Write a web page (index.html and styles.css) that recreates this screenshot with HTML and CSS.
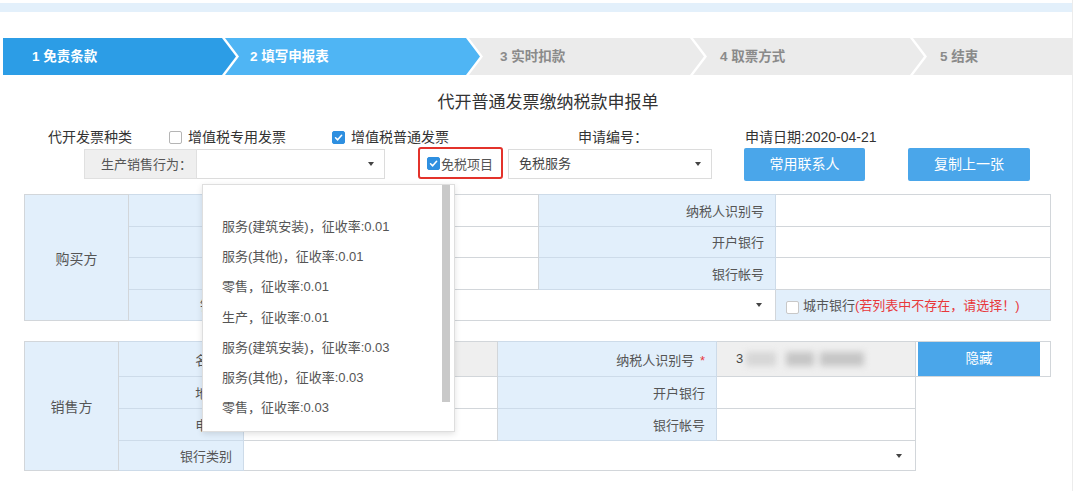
FILE: index.html
```html
<!DOCTYPE html>
<html lang="zh-CN">
<head>
<meta charset="utf-8">
<title>代开普通发票缴纳税款申报单</title>
<link rel="stylesheet" href="styles.css">
</head>
<body>
<div class="page">
  <div class="band"></div>
  <div class="steps">
    <div class="step s1 done">1 免责条款</div>
    <div class="step s2 cur">2 填写申报表</div>
    <div class="step s3">3 实时扣款</div>
    <div class="step s4">4 取票方式</div>
    <div class="step s5">5 结束</div>
  </div>
  <div class="form">
    <h1 class="title">代开普通发票缴纳税款申报单</h1>
    <div class="row1">
      <span class="kind">代开发票种类</span>
      <span class="opt opt1"><span class="cb"></span>增值税专用发票</span>
      <span class="opt opt2"><span class="cb on"><svg viewBox="0 0 13 13"><polyline points="3,6.8 5.5,9.3 10.2,3.8"/></svg></span>增值税普通发票</span>
      <span class="apply-no">申请编号：</span>
      <span class="apply-date">申请日期:2020-04-21</span>
    </div>
    <div class="row2">
      <span class="lbl-box">生产销售行为：</span>
      <span class="select sel1"><span class="caret"></span></span>
      <span class="redbox"><span class="cb on"><svg viewBox="0 0 13 13"><polyline points="3,6.8 5.5,9.3 10.2,3.8"/></svg></span>免税项目</span>
      <span class="select sel2">免税服务<span class="caret"></span></span>
      <span class="btn btn1">常用联系人</span>
      <span class="btn btn2">复制上一张</span>
    </div>

    <table class="tbl buyer">
      <colgroup><col class="c1"><col class="c2"><col class="c3"><col class="c4"><col class="c5"></colgroup>
      <tr>
        <td class="head" rowspan="4">购买方</td>
        <td class="lab"></td><td class="inp"></td>
        <td class="lab">纳税人识别号</td><td class="inp"></td>
      </tr>
      <tr>
        <td class="lab"></td><td class="inp"></td>
        <td class="lab">开户银行</td><td class="inp"></td>
      </tr>
      <tr>
        <td class="lab"></td><td class="inp"></td>
        <td class="lab">银行帐号</td><td class="inp"></td>
      </tr>
      <tr>
        <td class="lab">银行类别</td>
        <td class="inp sel" colspan="2"><span class="caret"></span></td>
        <td class="city"><span class="cb"></span>城市银行<span class="warn">(若列表中不存在，请选择！)</span></td>
      </tr>
    </table>

    <table class="tbl seller">
      <colgroup><col class="d1"><col class="d2"><col class="d3"><col class="d4"><col class="d5"><col class="d6"></colgroup>
      <tr class="r1">
        <td class="head" rowspan="4">销售方</td>
        <td class="lab">名称 <span class="req">*</span></td><td class="inp grey"></td>
        <td class="lab">纳税人识别号 <span class="req">*</span></td>
        <td class="inp grey"><span class="idnum">3</span><span class="blur"><i class="b1"></i><i class="b2"></i><i class="b3"></i></span></td>
        <td class="btncell"><span class="btn hide">隐藏</span></td>
      </tr>
      <tr>
        <td class="lab">地址 <span class="req">*</span></td><td class="inp"></td>
        <td class="lab">开户银行</td><td class="inp"></td>
        <td class="none"></td>
      </tr>
      <tr>
        <td class="lab">电话 <span class="req">*</span></td><td class="inp"></td>
        <td class="lab">银行帐号</td><td class="inp"></td>
        <td class="none"></td>
      </tr>
      <tr class="r4">
        <td class="lab">银行类别</td>
        <td class="inp sel" colspan="3"><span class="caret"></span></td>
        <td class="none"></td>
      </tr>
    </table>

    <div class="dropdown">
      <ul>
        <li class="blank"></li>
        <li>服务(建筑安装)，征收率:0.01</li>
        <li>服务(其他)，征收率:0.01</li>
        <li>零售，征收率:0.01</li>
        <li>生产，征收率:0.01</li>
        <li>服务(建筑安装)，征收率:0.03</li>
        <li>服务(其他)，征收率:0.03</li>
        <li>零售，征收率:0.03</li>
      </ul>
      <div class="scroll"></div>
    </div>
  </div>
</div>
</body>
</html>
```
FILE: styles.css
```css
* { box-sizing: border-box; }
html, body { margin: 0; padding: 0; background: #fff; }
body {
  font-family: "Liberation Sans", "Noto Sans CJK SC", sans-serif;
  color: #333;
  width: 1080px;
  height: 491px;
  overflow: hidden;
}
.page {
  width: 1073px;
  height: 491px;
  border-right: 1px solid #ececec;
  padding-top: 3px;
}
.band { height: 9px; background: #e3f0fb; }

/* steps */
.steps { display: flex; margin-top: 26px; padding-left: 3px; height: 37px; }
.step {
  height: 37px;
  line-height: 37px;
  font-size: 13.5px;
  font-weight: bold;
  color: #8a8a8a;
  background: #ebebeb;
  padding-left: 28px;
  margin-left: -11px;
  clip-path: polygon(0 0, calc(100% - 14px) 0, 100% 50%, calc(100% - 14px) 100%, 0 100%, 14px 50%);
  white-space: nowrap;
}
.step.done { background: #2c9de6; color: #fff; padding-left: 29px; }
.step.cur { background: #4fb5f4; color: #fff; padding-left: 25px; }
.s1 { width: 233px; margin-left: 0; clip-path: polygon(0 0, calc(100% - 14px) 0, 100% 50%, calc(100% - 14px) 100%, 0 100%); }
.s2 { width: 255px; }
.s3 { width: 235px; padding-left: 31px; }
.s4 { width: 231px; padding-left: 27px; }
.s5 { width: 159px; padding-left: 27px; clip-path: polygon(0 0, 100% 0, 100% 100%, 0 100%, 14px 50%); }

/* form */
.form { position: relative; }
.title {
  margin: 17px 0 0;
  padding-left: 24px;
  height: 22px;
  line-height: 22px;
  font-size: 17px;
  font-weight: normal;
  text-align: center;
  color: #333;
}
.row1 {
  display: flex;
  align-items: center;
  margin-top: 15px;
  height: 16px;
  line-height: 16px;
  font-size: 14px;
  padding-left: 48px;
  color: #333;
}
.opt { display: inline-flex; align-items: center; }
.opt .cb { margin-right: 6px; }
.opt1 { margin-left: 37px; }
.opt2 { margin-left: 46px; }
.apply-no { margin-left: 129px; }
.apply-date { margin-left: 97px; }

.cb {
  display: inline-block;
  width: 13px;
  height: 13px;
  border: 1px solid #b5b5b5;
  border-radius: 2px;
  background: #fff;
  flex: none;
}
.cb.on { background: #2e8fe0; border-color: #2e8fe0; }
.cb svg { display: block; width: 11px; height: 11px; }
.cb polyline { fill: none; stroke: #fff; stroke-width: 1.8; stroke-linecap: round; stroke-linejoin: round; }

.row2 {
  display: flex;
  align-items: center;
  margin-top: 2px;
  height: 34px;
  padding-left: 84px;
  font-size: 13px;
}
.lbl-box {
  width: 113px;
  height: 30px;
  line-height: 30px;
  background: #efefef;
  border: 1px solid #e0e0e0;
  color: #555;
  padding-left: 16px;
}
.select {
  position: relative;
  height: 30px;
  line-height: 28px;
  border: 1px solid #dcdcdc;
  background: #fff;
  color: #444;
  padding-left: 10px;
}
.sel1 { width: 188px; border-left: none; }
.sel2 { width: 204px; margin-left: 5px; }
.caret {
  position: absolute;
  right: 10px;
  top: 50%;
  margin-top: -2px;
  width: 0; height: 0;
  border-left: 3.5px solid transparent;
  border-right: 3.5px solid transparent;
  border-top: 4px solid #444;
}
.redbox {
  display: inline-flex;
  align-items: center;
  width: 85px;
  height: 32px;
  margin-left: 33px;
  margin-top: -2px;
  border: 2px solid #e3322b;
  border-radius: 3px;
  padding-left: 7px;
  color: #555;
  font-size: 13px;
}
.redbox .cb { margin-right: 1px; }
.btn {
  display: inline-block;
  height: 33px;
  line-height: 33px;
  background: #4aa6ea;
  color: #fff;
  font-size: 14px;
  text-align: center;
  border-radius: 2px;
}
.btn1 { width: 121px; margin-left: 32px; }
.btn2 { width: 122px; margin-left: 43px; }

/* tables */
.tbl {
  border-collapse: collapse;
  table-layout: fixed;
  width: 1026px;
  margin-left: 24px;
  font-size: 13px;
  color: #555;
}
.tbl td { border: 1px solid #d2d6da; padding: 0; }
.tbl .head { background: #e2effb; text-align: center; font-size: 14px; }
.tbl .lab { background: #e2effb; text-align: right; padding-right: 11px; border-color: #cddbe9; }
.tbl .inp { background: #fff; position: relative; }
.tbl .inp.grey { background: #efefef; }
.tbl .sel .caret { right: 13px; }
.buyer { margin-top: 13px; }
.buyer col.c1 { width: 104px; }
.buyer col.c2 { width: 135px; }
.buyer col.c3 { width: 275px; }
.buyer col.c4 { width: 237px; }
.buyer col.c5 { width: 275px; }
.buyer td { height: 31.5px; }
.buyer .city { background: #e2effb; padding-left: 10px; font-size: 13px; color: #555; }
.city .cb { vertical-align: -4px; margin-right: 4px; border-color: #c8c8c8; }
.warn { color: #e8383b; }

.seller { margin-top: 20px; }
.seller col.d1 { width: 94px; }
.seller col.d2 { width: 125px; }
.seller col.d3 { width: 254px; }
.seller col.d4 { width: 219px; }
.seller col.d5 { width: 199px; }
.seller col.d6 { width: 135px; }
.seller td { height: 32px; }
.seller tr.r1 td { height: 35px; }
.seller tr.r4 td { height: 30px; }
.seller td.none { border: none; border-left: 1px solid #d2d6da; background: #fff; }
.req { color: #e8383b; margin-left: 2px; }
.idnum { position: absolute; left: 19px; top: 9px; color: #444; font-size: 13px; }
.blur { position: absolute; left: 29px; top: 10px; height: 14px; width: 118px; filter: blur(3px); }
.blur i { position: absolute; top: 0; height: 14px; background: #c6c6c6; }
.blur .b1 { left: 0; width: 30px; background: #d6d6d6; }
.blur .b2 { left: 40px; width: 28px; }
.blur .b3 { left: 74px; width: 44px; }
.btncell { padding: 0 10px 0 2px !important; background: #fff; }
.btncell .btn { display: block; height: 34px; line-height: 34px; font-size: 13.5px; border-radius: 0; width: 122px; }

/* dropdown overlay */
.dropdown {
  position: absolute;
  left: 202px;
  top: 92px;
  width: 253px;
  height: 248px;
  background: #fff;
  border: 1px solid #dedede;
  box-shadow: 0 2px 6px rgba(0,0,0,0.12);
  overflow: hidden;
}
.dropdown ul { list-style: none; margin: 0; padding: 0; }
.dropdown li {
  height: 30.2px;
  line-height: 30.2px;
  padding-left: 19px;
  font-size: 13px;
  color: #555;
  white-space: nowrap;
}
.dropdown li.blank { height: 27px; }
.scroll {
  position: absolute;
  right: 4px;
  top: 0;
  width: 8px;
  height: 217px;
  background: #c9c9c9;
}
```
